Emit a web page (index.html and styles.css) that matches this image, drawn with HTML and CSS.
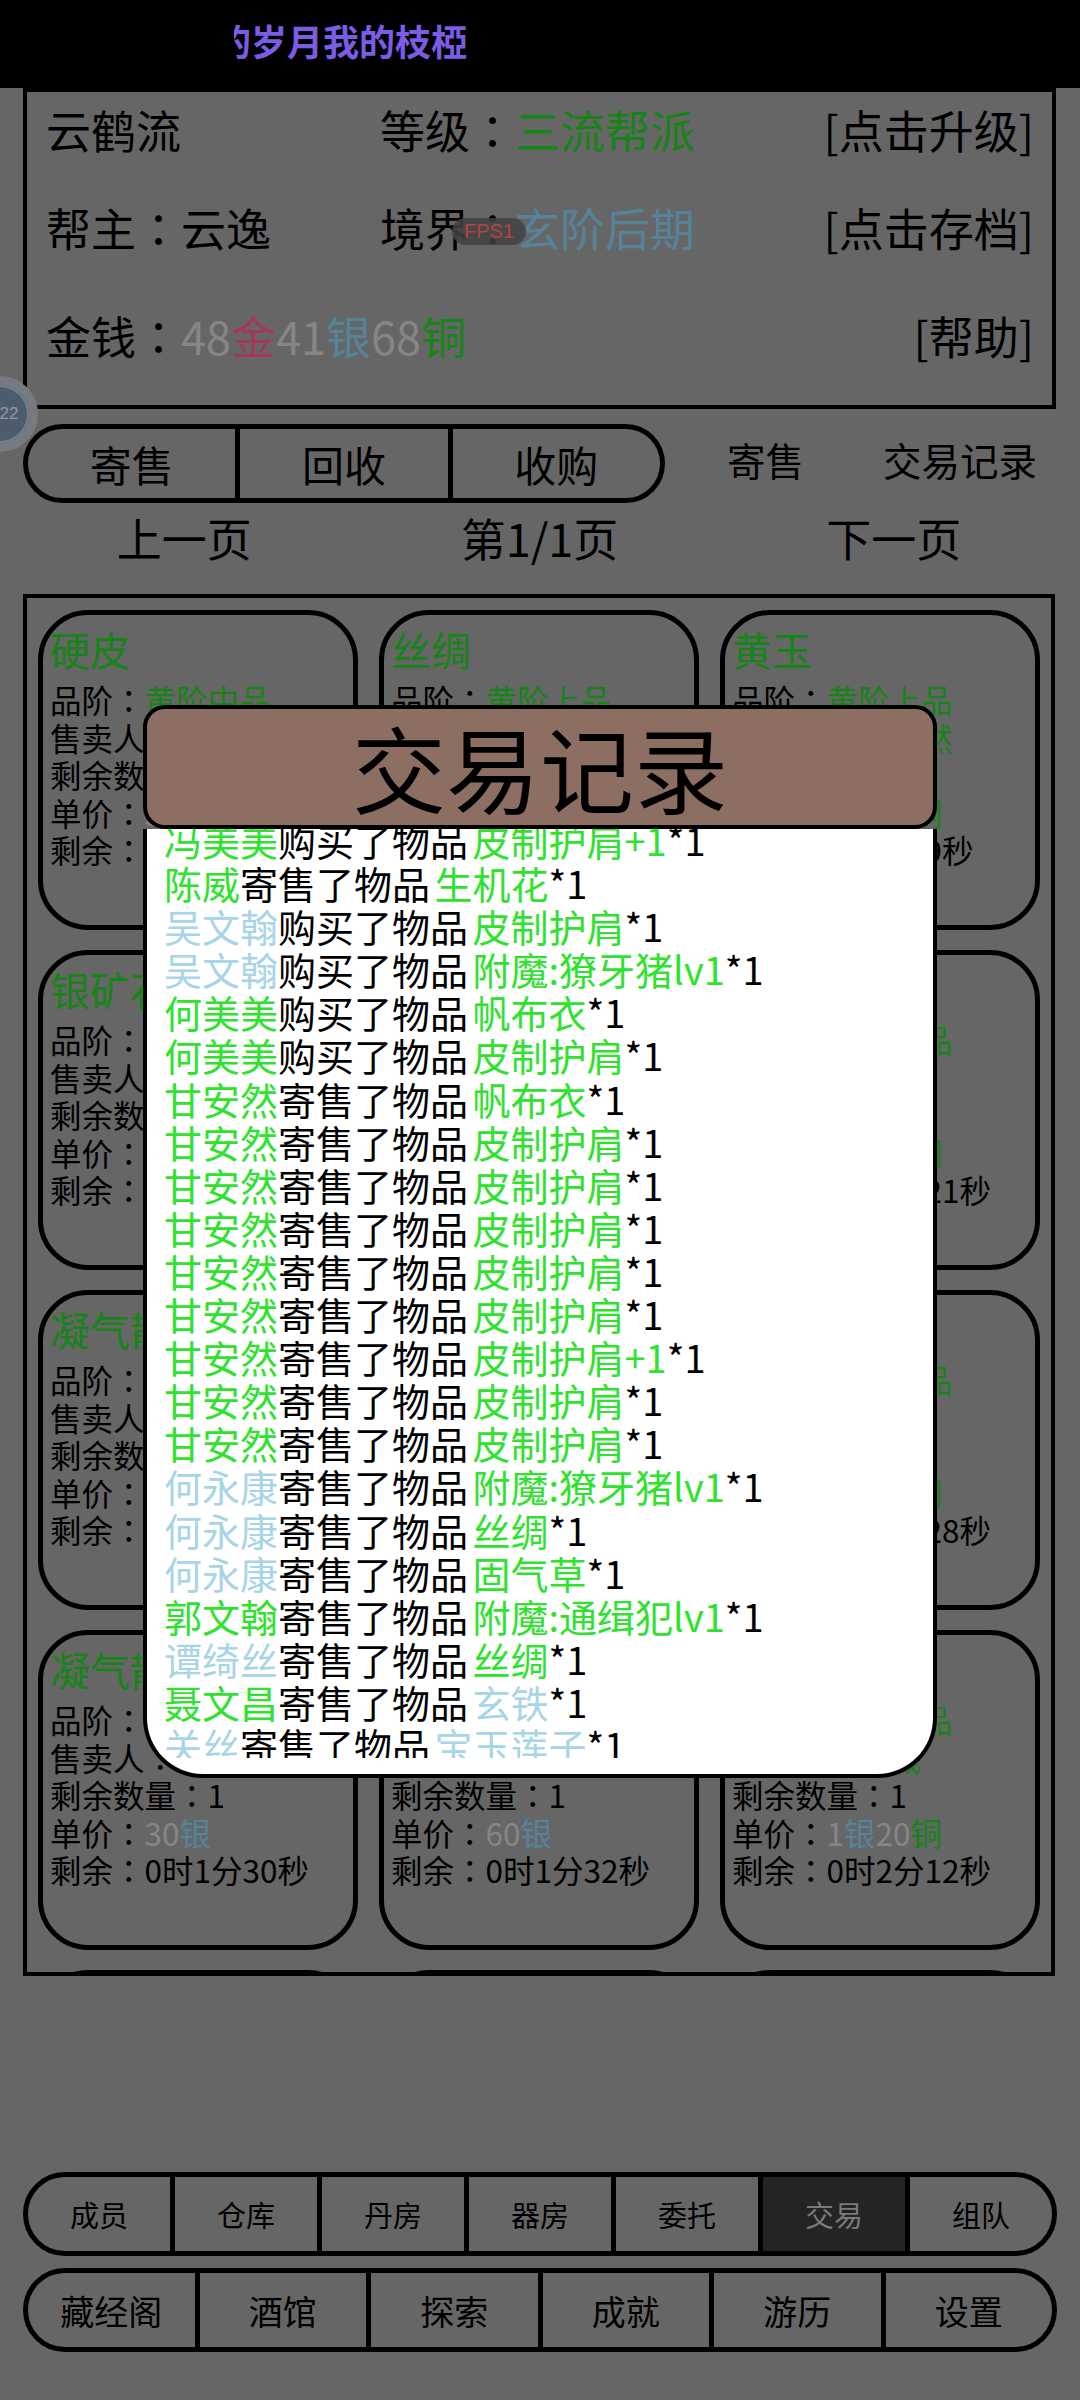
FILE: index.html
```html
<!DOCTYPE html>
<html lang="zh-CN">
<head>
    <meta charset="UTF-8">
    <meta name="viewport" content="width=device-width, initial-scale=1.0">
    <title>帮派 - 交易</title>
    <link rel="stylesheet" href="styles.css">
</head>
<body>
    <div class="top-bar">
        <div class="marquee"><span>的岁月我的枝椏</span></div>
    </div>

    <div class="info-box">
        <div class="info-row">
            <span>云鹤流</span>
            <span>等级<i class="c" lang="zh-TW">：</i><span class="g">三流帮派</span></span>
            <span>[点击升级]</span>
        </div>
        <div class="info-row row-2">
            <span>帮主<i class="c" lang="zh-TW">：</i>云逸</span>
            <span>境界<i class="c" lang="zh-TW">：</i><span class="b">玄阶后期</span></span>
            <span>[点击存档]</span>
        </div>
        <div class="info-row row-3">
            <span>金钱<i class="c" lang="zh-TW">：</i><span class="n">48</span><span class="au">金</span><span class="n">41</span><span class="b">银</span><span class="n">68</span><span class="g">铜</span></span>
            <span></span>
            <span>[帮助]</span>
        </div>
    </div>

    <div class="tab-row">
        <div class="seg-pill">
            <div class="seg">寄售</div>
            <div class="seg">回收</div>
            <div class="seg">收购</div>
        </div>
        <div class="tab-link first">寄售</div>
        <div class="tab-link">交易记录</div>
    </div>

    <div class="pager">
        <span>上一页</span>
        <span>第1/1页</span>
        <span>下一页</span>
    </div>

    <div class="card-frame">
        <div class="card-grid">
            <div class="card">
                <div class="card-title">硬皮</div>
                <div>品阶<i class="c" lang="zh-TW">：</i><span class="g">黄阶中品</span></div>
                <div>售卖人<i class="c" lang="zh-TW">：</i><span class="g">何美美</span></div>
                <div>剩余数量<i class="c" lang="zh-TW">：</i>1</div>
                <div>单价<i class="c" lang="zh-TW">：</i><span class="n">30</span><span class="b">银</span></div>
                <div>剩余<i class="c" lang="zh-TW">：</i>0时1分26秒</div>
            </div>
            <div class="card">
                <div class="card-title">丝绸</div>
                <div>品阶<i class="c" lang="zh-TW">：</i><span class="g">黄阶上品</span></div>
                <div>售卖人<i class="c" lang="zh-TW">：</i><span class="b">谭绮丝</span></div>
                <div>剩余数量<i class="c" lang="zh-TW">：</i>1</div>
                <div>单价<i class="c" lang="zh-TW">：</i><span class="n">60</span><span class="b">银</span></div>
                <div>剩余<i class="c" lang="zh-TW">：</i>0时1分28秒</div>
            </div>
            <div class="card">
                <div class="card-title">黄玉</div>
                <div>品阶<i class="c" lang="zh-TW">：</i><span class="g">黄阶上品</span></div>
                <div>售卖人<i class="c" lang="zh-TW">：</i><span class="g">甘安然</span></div>
                <div>剩余数量<i class="c" lang="zh-TW">：</i>1</div>
                <div>单价<i class="c" lang="zh-TW">：</i><span class="n">1</span><span class="b">银</span><span class="n">20</span><span class="g">铜</span></div>
                <div>剩余<i class="c" lang="zh-TW">：</i>0时2分9秒</div>
            </div>

            <div class="card">
                <div class="card-title">银矿石</div>
                <div>品阶<i class="c" lang="zh-TW">：</i><span class="g">黄阶中品</span></div>
                <div>售卖人<i class="c" lang="zh-TW">：</i><span class="g">陈威</span></div>
                <div>剩余数量<i class="c" lang="zh-TW">：</i>1</div>
                <div>单价<i class="c" lang="zh-TW">：</i><span class="n">40</span><span class="b">银</span></div>
                <div>剩余<i class="c" lang="zh-TW">：</i>0时1分45秒</div>
            </div>
            <div class="card">
                <div class="card-title">皮制护肩</div>
                <div>品阶<i class="c" lang="zh-TW">：</i><span class="g">黄阶上品</span></div>
                <div>售卖人<i class="c" lang="zh-TW">：</i><span class="g">甘安然</span></div>
                <div>剩余数量<i class="c" lang="zh-TW">：</i>1</div>
                <div>单价<i class="c" lang="zh-TW">：</i><span class="n">80</span><span class="b">银</span></div>
                <div>剩余<i class="c" lang="zh-TW">：</i>0时1分50秒</div>
            </div>
            <div class="card">
                <div class="card-title">固气草</div>
                <div>品阶<i class="c" lang="zh-TW">：</i><span class="g">黄阶上品</span></div>
                <div>售卖人<i class="c" lang="zh-TW">：</i><span class="g">陈威</span></div>
                <div>剩余数量<i class="c" lang="zh-TW">：</i>1</div>
                <div>单价<i class="c" lang="zh-TW">：</i><span class="n">1</span><span class="b">银</span><span class="n">10</span><span class="g">铜</span></div>
                <div>剩余<i class="c" lang="zh-TW">：</i>0时2分21秒</div>
            </div>

            <div class="card">
                <div class="card-title">凝气散</div>
                <div>品阶<i class="c" lang="zh-TW">：</i><span class="g">黄阶中品</span></div>
                <div>售卖人<i class="c" lang="zh-TW">：</i><span class="b">吴文翰</span></div>
                <div>剩余数量<i class="c" lang="zh-TW">：</i>1</div>
                <div>单价<i class="c" lang="zh-TW">：</i><span class="n">30</span><span class="b">银</span></div>
                <div>剩余<i class="c" lang="zh-TW">：</i>0时1分56秒</div>
            </div>
            <div class="card">
                <div class="card-title">帆布衣</div>
                <div>品阶<i class="c" lang="zh-TW">：</i><span class="g">黄阶中品</span></div>
                <div>售卖人<i class="c" lang="zh-TW">：</i><span class="g">何美美</span></div>
                <div>剩余数量<i class="c" lang="zh-TW">：</i>1</div>
                <div>单价<i class="c" lang="zh-TW">：</i><span class="n">50</span><span class="b">银</span></div>
                <div>剩余<i class="c" lang="zh-TW">：</i>0时2分3秒</div>
            </div>
            <div class="card">
                <div class="card-title">生机花</div>
                <div>品阶<i class="c" lang="zh-TW">：</i><span class="g">黄阶上品</span></div>
                <div>售卖人<i class="c" lang="zh-TW">：</i><span class="b">关丝</span></div>
                <div>剩余数量<i class="c" lang="zh-TW">：</i>1</div>
                <div>单价<i class="c" lang="zh-TW">：</i><span class="n">1</span><span class="b">银</span><span class="n">30</span><span class="g">铜</span></div>
                <div>剩余<i class="c" lang="zh-TW">：</i>0时2分28秒</div>
            </div>

            <div class="card">
                <div class="card-title">凝气散</div>
                <div>品阶<i class="c" lang="zh-TW">：</i><span class="g">黄阶中品</span></div>
                <div>售卖人<i class="c" lang="zh-TW">：</i><span class="g">郭文翰</span></div>
                <div>剩余数量<i class="c" lang="zh-TW">：</i>1</div>
                <div>单价<i class="c" lang="zh-TW">：</i><span class="n">30</span><span class="b">银</span></div>
                <div>剩余<i class="c" lang="zh-TW">：</i>0时1分30秒</div>
            </div>
            <div class="card">
                <div class="card-title">丝绸</div>
                <div>品阶<i class="c" lang="zh-TW">：</i><span class="g">黄阶上品</span></div>
                <div>售卖人<i class="c" lang="zh-TW">：</i><span class="b">谭绮丝</span></div>
                <div>剩余数量<i class="c" lang="zh-TW">：</i>1</div>
                <div>单价<i class="c" lang="zh-TW">：</i><span class="n">60</span><span class="b">银</span></div>
                <div>剩余<i class="c" lang="zh-TW">：</i>0时1分32秒</div>
            </div>
            <div class="card">
                <div class="card-title">玄铁</div>
                <div>品阶<i class="c" lang="zh-TW">：</i><span class="g">黄阶上品</span></div>
                <div>售卖人<i class="c" lang="zh-TW">：</i><span class="g">陈威</span></div>
                <div>剩余数量<i class="c" lang="zh-TW">：</i>1</div>
                <div>单价<i class="c" lang="zh-TW">：</i><span class="n">1</span><span class="b">银</span><span class="n">20</span><span class="g">铜</span></div>
                <div>剩余<i class="c" lang="zh-TW">：</i>0时2分12秒</div>
            </div>

            <!-- next row, scrolled out of view -->
            <div class="card"><div class="card-title">宝玉莲子</div></div>
            <div class="card"><div class="card-title">附魔:通缉犯lv1</div></div>
            <div class="card"><div class="card-title">附魔:獠牙猪lv1</div></div>
        </div>
    </div>

    <div class="nav nav-top">
        <div class="nav-item">成员</div>
        <div class="nav-item">仓库</div>
        <div class="nav-item">丹房</div>
        <div class="nav-item">器房</div>
        <div class="nav-item">委托</div>
        <div class="nav-item active">交易</div>
        <div class="nav-item">组队</div>
    </div>
    <div class="nav nav-bottom">
        <div class="nav-item">藏经阁</div>
        <div class="nav-item">酒馆</div>
        <div class="nav-item">探索</div>
        <div class="nav-item">成就</div>
        <div class="nav-item">游历</div>
        <div class="nav-item">设置</div>
    </div>

    <!-- overlays -->
    <div class="fps">FPS1</div>
    <div class="float-ball"><span>22</span></div>

    <div class="dialog">
        <div class="dialog-head">交易记录</div>
        <div class="dialog-body">
            <div class="log">
                <div class="log-list">
                    <div><span class="lg">冯美美</span>购买了物品 <span class="lg">皮制护肩+1</span>*1</div>
                    <div><span class="lg">陈威</span>寄售了物品 <span class="lg">生机花</span>*1</div>
                    <div><span class="lb">吴文翰</span>购买了物品 <span class="lg">皮制护肩</span>*1</div>
                    <div><span class="lb">吴文翰</span>购买了物品 <span class="lg">附魔:獠牙猪lv1</span>*1</div>
                    <div><span class="lg">何美美</span>购买了物品 <span class="lg">帆布衣</span>*1</div>
                    <div><span class="lg">何美美</span>购买了物品 <span class="lg">皮制护肩</span>*1</div>
                    <div><span class="lg">甘安然</span>寄售了物品 <span class="lg">帆布衣</span>*1</div>
                    <div><span class="lg">甘安然</span>寄售了物品 <span class="lg">皮制护肩</span>*1</div>
                    <div><span class="lg">甘安然</span>寄售了物品 <span class="lg">皮制护肩</span>*1</div>
                    <div><span class="lg">甘安然</span>寄售了物品 <span class="lg">皮制护肩</span>*1</div>
                    <div><span class="lg">甘安然</span>寄售了物品 <span class="lg">皮制护肩</span>*1</div>
                    <div><span class="lg">甘安然</span>寄售了物品 <span class="lg">皮制护肩</span>*1</div>
                    <div><span class="lg">甘安然</span>寄售了物品 <span class="lg">皮制护肩+1</span>*1</div>
                    <div><span class="lg">甘安然</span>寄售了物品 <span class="lg">皮制护肩</span>*1</div>
                    <div><span class="lg">甘安然</span>寄售了物品 <span class="lg">皮制护肩</span>*1</div>
                    <div><span class="lb">何永康</span>寄售了物品 <span class="lg">附魔:獠牙猪lv1</span>*1</div>
                    <div><span class="lb">何永康</span>寄售了物品 <span class="lg">丝绸</span>*1</div>
                    <div><span class="lb">何永康</span>寄售了物品 <span class="lg">固气草</span>*1</div>
                    <div><span class="lg">郭文翰</span>寄售了物品 <span class="lg">附魔:通缉犯lv1</span>*1</div>
                    <div><span class="lb">谭绮丝</span>寄售了物品 <span class="lg">丝绸</span>*1</div>
                    <div><span class="lg">聂文昌</span>寄售了物品 <span class="lb">玄铁</span>*1</div>
                    <div><span class="lb">关丝</span>寄售了物品 <span class="lb">宝玉莲子</span>*1</div>
                </div>
            </div>
        </div>
    </div>
</body>
</html>
```

FILE: styles.css
```css
:root {
    --page-bg: #666666;
    --line: #000000;
    --dim-green: #168416;
    --dim-blue: #55849a;
    --dim-num: #868686;
    --dim-gold: #a03a58;
    --log-green: #2ee22e;
    --log-blue: #a8d5e6;
    --dialog-head: #8d6e63;
}

* {
    margin: 0;
    padding: 0;
    box-sizing: border-box;
}

body {
    width: 1080px;
    height: 2400px;
    overflow: hidden;
    position: relative;
    background-color: var(--page-bg);
    color: #000;
    font-family: "Noto Sans CJK SC", "Noto Sans", sans-serif;
}

.g { color: var(--dim-green); }
.b { color: var(--dim-blue); }
.n { color: var(--dim-num); }
.au { color: var(--dim-gold); }
.lg { color: var(--log-green); }
.lb { color: var(--log-blue); }

/* full-width colon, centred the way the app's font draws it */
.c {
    font-style: normal;
    font-family: "Noto Sans CJK TC", "Noto Sans CJK SC", sans-serif;
}

/* top bar */
.top-bar {
    height: 88px;
    background-color: #000;
}

.marquee {
    margin-left: 234px;
    width: 300px;
    overflow: hidden;
    white-space: nowrap;
    font-size: 36px;
    font-weight: 700;
    line-height: 80px;
    color: #7c5ce4;
}

.marquee span {
    display: inline-block;
    margin-left: -19px;
}

/* guild info */
.info-box {
    margin: 0 24px 0 23px;
    height: 321px;
    border: 4px solid var(--line);
    padding: 8px 18px 0 19px;
    font-size: 45px;
}

.info-row {
    display: grid;
    grid-template-columns: 334px 1fr auto;
    height: 60px;
    line-height: 60px;
    white-space: nowrap;
}

.row-2 { margin-top: 38px; }
.row-3 { margin-top: 48px; }

/* tabs */
.tab-row {
    display: flex;
    align-items: center;
    margin: 15px 0 0 23px;
    height: 79px;
}

.seg-pill {
    display: flex;
    width: 642px;
    height: 79px;
    border: 5px solid var(--line);
    border-radius: 40px;
    overflow: hidden;
}

.seg {
    flex: 1;
    display: flex;
    justify-content: center;
    align-items: center;
    font-size: 42px;
}

.seg + .seg {
    border-left: 5px solid var(--line);
}

.tab-link {
    margin-left: 79px;
    padding-bottom: 9px;
    font-size: 38.5px;
}

.tab-link.first {
    margin-left: 62px;
}

.pager {
    display: grid;
    grid-template-columns: repeat(3, 1fr);
    margin: 7px 24px 0 23px;
    font-size: 45px;
    line-height: 56px;
    text-align: center;
}

.pager span:first-child { padding-right: 22px; }
.pager span:last-child { padding-left: 20px; }

/* goods */
.card-frame {
    margin: 28px 25px 0 23px;
    height: 1382px;
    border: 4px solid var(--line);
    overflow: hidden;
    padding: 12px 11px 0 11px;
}

.card-grid {
    display: grid;
    grid-template-columns: repeat(3, 320px);
    grid-auto-rows: 320px;
    column-gap: 21px;
    row-gap: 20px;
}

.card {
    border: 5px solid var(--line);
    border-radius: 50px;
    padding: 10px 0 0 7px;
    font-size: 31.5px;
    line-height: 37.5px;
    white-space: nowrap;
}

.card-title {
    font-size: 40px;
    line-height: 48px;
    margin-bottom: 8px;
    color: var(--dim-green);
}

/* bottom nav */
.nav {
    display: flex;
    margin: 0 23px;
    height: 84px;
    border: 5px solid var(--line);
    border-radius: 42px;
    overflow: hidden;
}

.nav-top {
    margin-top: 196px;
    font-size: 29px;
}

.nav-bottom {
    margin-top: 12px;
    font-size: 34px;
}

.nav-item {
    flex: 1;
    display: flex;
    justify-content: center;
    align-items: center;
}

.nav-item + .nav-item {
    border-left: 5px solid var(--line);
}

.nav-item.active {
    background-color: #242424;
    color: #7a7a7a;
}

/* floating bits */
.fps {
    position: absolute;
    left: 452px;
    top: 218px;
    width: 74px;
    height: 27px;
    border-radius: 14px;
    background-color: rgba(66, 66, 66, 0.85);
    color: #b04444;
    font-family: "Liberation Sans", sans-serif;
    font-size: 20px;
    line-height: 27px;
    text-align: center;
}

.float-ball {
    position: absolute;
    left: -38px;
    top: 376px;
    width: 76px;
    height: 76px;
    border-radius: 50%;
    border: 9px solid #777b80;
    background-color: #4c5c6c;
    box-shadow: inset 0 0 0 2px #6f8090;
    display: flex;
    justify-content: center;
    align-items: center;
}

.float-ball span {
    margin-left: 18px;
    font-family: "Liberation Sans", sans-serif;
    font-size: 17px;
    color: #8b9aa8;
}

/* trade record dialog */
.dialog {
    position: absolute;
    left: 143px;
    top: 705px;
    width: 794px;
}

.dialog-head {
    position: relative;
    z-index: 1;
    height: 124px;
    border: 4px solid var(--line);
    border-radius: 22px;
    background-color: var(--dialog-head);
    font-size: 94px;
    line-height: 114px;
    text-align: center;
}

.dialog-body {
    height: 949px;
    border: 4px solid var(--line);
    border-top: 0;
    border-radius: 0 0 60px 60px;
    background-color: #fff;
    padding: 0 16px 16px 17px;
}

.log {
    height: 929px;
    overflow: hidden;
}

.log-list {
    margin-top: -11px;
    font-size: 38px;
    line-height: 43.1px;
    white-space: nowrap;
    word-spacing: -4px;
}
```
